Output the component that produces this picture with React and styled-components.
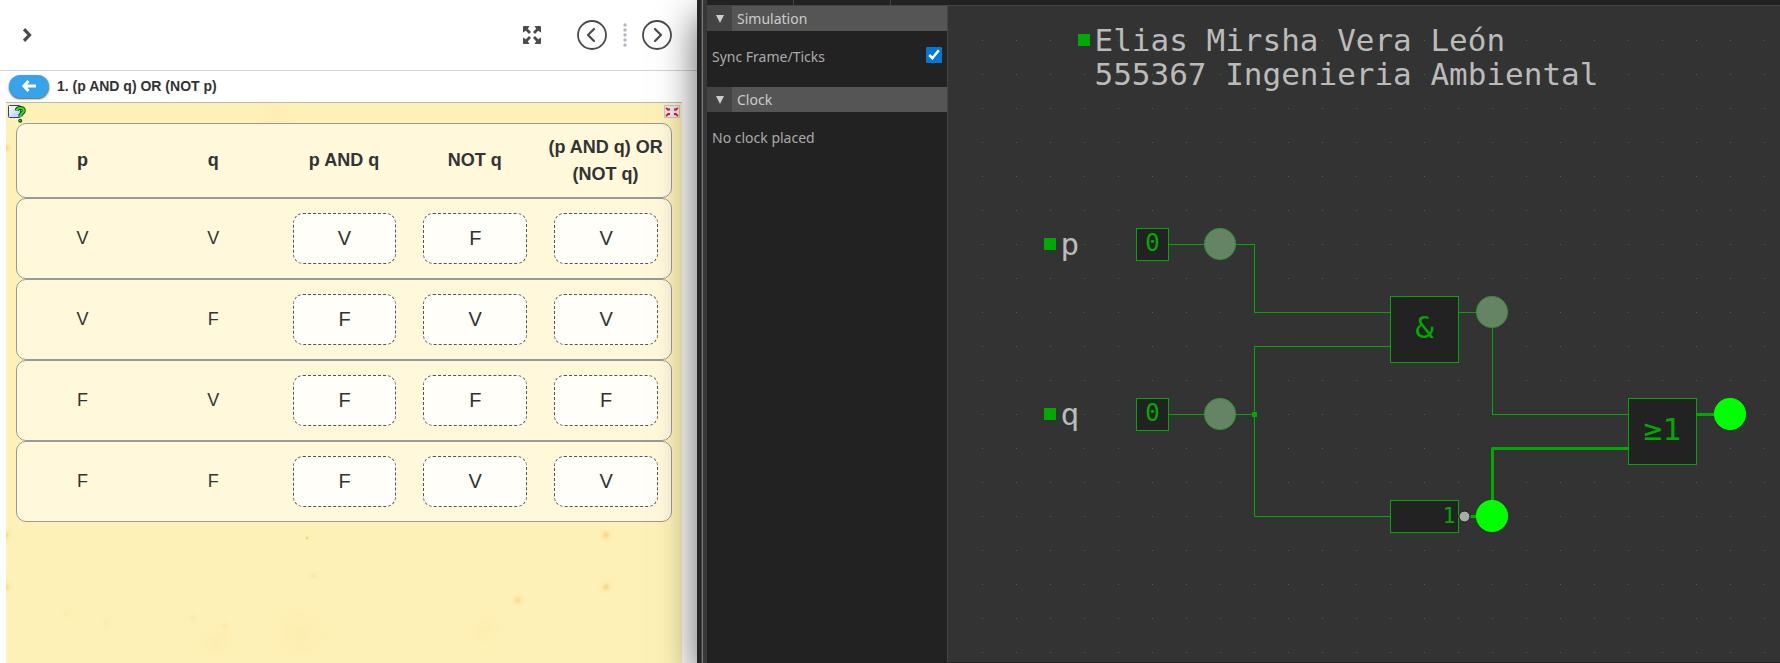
import React, { useState } from "react";
import styled, { createGlobalStyle } from "styled-components";

const GlobalStyle = createGlobalStyle`
  *, *::before, *::after { box-sizing: border-box; }
  body { margin: 0; background: #222; }
  button { font: inherit; color: inherit; border: 0; padding: 0; background: none; cursor: pointer; }
`;

const Screen = styled.div`
  display: grid;
  grid-template-columns: minmax(0, 697fr) 10px minmax(0, 1073fr);
  min-height: 100vh;
  overflow: hidden;
`;

/* ---------- lesson pane ---------- */

const Lesson = styled.main`
  display: flex;
  flex-direction: column;
  background: #fff;
  color: #333;
  font-family: "Liberation Sans", Arial, sans-serif;
`;

const LessonNav = styled.nav`
  display: flex;
  align-items: center;
  height: 71px;
  padding: 0 25px 0 23px;
  border-bottom: 1px solid #cdd5dc;
  color: #494c4e;
`;

const IconButton = styled.button`
  display: flex;
  margin-left: ${(p) => (p.$push ? "auto" : "0")};
  margin-right: ${(p) => p.$gap || 0}px;
`;

const LessonTitle = styled.header`
  display: flex;
  align-items: center;
  gap: 8px;
  height: 32px;
  margin: 0 15px 0 6px;
  padding: 0 0 1px 3px;
  border-bottom: 1px solid #b8b8b8;
`;

const BackButton = styled.button`
  display: flex;
  align-items: center;
  justify-content: center;
  width: 40px;
  height: 23px;
  border-radius: 12px;
  background: #36a3eb;
  box-shadow: 0 1px 2px rgba(0, 0, 0, 0.7);
`;

const Title = styled.h1`
  margin: 0;
  font-size: 14px;
  line-height: 20px;
`;

const spot = (x, y, r, alpha) =>
  `radial-gradient(circle at ${x} ${y}px, rgba(236, 180, 90, ${alpha}), rgba(250, 215, 120, ${alpha / 3}) ${r / 2}px, rgba(250, 215, 120, 0) ${r}px)`;

const Paper = styled.section`
  flex: 1;
  margin: 0 15px 0 6px;
  padding: 0 10px 24px;
  background-color: #fef1b7;
  background-image: ${[
    spot("0px", 45, 8, 0.5),
    spot("0px", 432, 8, 0.5),
    spot("0px", 484, 8, 0.5),
    spot("301px", 435, 3, 0.9),
    spot("600px", 432, 9, 0.5),
    spot("600px", 484, 9, 0.5),
    spot("512px", 497, 9, 0.4),
    spot("307px", 473, 7, 0.2),
    spot("187px", 515, 8, 0.15),
    spot("219px", 523, 8, 0.15),
    spot("60px", 511, 9, 0.1),
    spot("100px", 520, 9, 0.1),
    spot("295px", 530, 40, 0.08),
    spot("210px", 540, 24, 0.08),
    spot("270px", 10, 30, 0.06),
    spot("480px", 527, 24, 0.08),
  ].join(",")};
`;

const PaperTools = styled.div`
  display: flex;
  justify-content: space-between;
  align-items: flex-start;
  height: 20px;
  margin: 0 -8px;
  padding-top: 2px;
`;

const TruthTable = styled.table`
  display: block;
  font-size: 18px;
  line-height: 27px;
  thead, tbody { display: block; }
`;

const TableRow = styled.tr`
  display: grid;
  grid-template-columns: repeat(5, minmax(0, 1fr));
  align-items: center;
  height: ${(p) => (p.$head ? 75 : 81)}px;
  border: 1px solid #999;
  border-radius: 10px;
  background: rgba(255, 255, 255, 0.5);
`;

const HeadCell = styled.th`
  padding: 0;
  text-align: center;
`;

const Cell = styled.td`
  display: flex;
  justify-content: center;
  padding: 0 13px;
`;

const Answer = styled.button`
  flex: 1;
  height: 51px;
  margin-left: 1px;
  border: 1px dashed #555;
  border-radius: 10px;
  background: rgba(255, 255, 255, 0.8);
  font-size: 20px;
`;

/* ---------- simulator pane ---------- */

const Divider = styled.div`
  position: relative;
  z-index: 1;
  border-left: 4px solid #262626;
  border-right: 4px solid #383838;
  background: linear-gradient(90deg, #444 50%, #777 50%);
`;

const Simulator = styled.section`
  position: relative;
  display: flex;
  flex-direction: column;
  background: #222;
  border-bottom: 1px solid #222;
  box-shadow: -10px 16px 36px rgba(0, 0, 0, 0.62);
`;

const TabStrip = styled.div`
  display: flex;
  height: 6px;
  border-bottom: 1px solid #444;
`;

const TabEdge = styled.div`
  width: ${(p) => p.$width}px;
  border-right: 1px solid #444;
`;

const Workspace = styled.div`
  flex: 1;
  display: flex;
`;

const Sidebar = styled.aside`
  flex: 0 0 241px;
  border-right: 1px solid #444;
  color: #aaa;
  font-family: "Noto Sans", sans-serif;
  font-size: 14px;
  line-height: 20px;
`;

const SectionHead = styled.div`
  display: flex;
  height: 25px;
  background: #555;
  color: #ccc;
`;

const Toggle = styled.button`
  display: flex;
  align-items: center;
  justify-content: center;
  width: 25px;
  background: #444;
`;

const SectionName = styled.h2`
  margin: 0;
  padding: 0 5px;
  font-size: 14px;
  font-weight: 400;
  line-height: 25px;
`;

const SectionBody = styled.div`
  display: flex;
  align-items: flex-start;
  justify-content: space-between;
  padding: 16px 5px 20px;
`;

const Check = styled.input`
  width: 16px;
  height: 16px;
  margin: 0;
  accent-color: #0078d7;
`;

const Canvas = styled.div`
  flex: 1;
  min-width: 0;
  display: flex;
  background: #333;
`;

const Circuit = styled.svg`
  flex: 1;
  min-width: 0;
  min-height: 560px;
  font-family: "DejaVu Sans Mono", monospace;
`;

const Glyph = styled.text`
  font-size: ${(p) => p.$size || 31}px;
  fill: ${(p) => (p.$label ? "#bbb" : "#0a0")};
`;

const Wire = styled.path`
  fill: none;
  stroke: #0a0;
  stroke-width: ${(p) => (p.$on ? 3 : 1)};
  stroke-linejoin: round;
`;

const Box = styled.rect`
  fill: #222;
  stroke: #0a0;
`;

const Bulb = styled.circle`
  fill: ${(p) => (p.$on ? "#0f0" : "#648464")};
  stroke: ${(p) => (p.$on ? "#0f0" : "#2f8f2f")};
`;

const UNIT = 34;
const at = (n) => n * UNIT;
const route = (points) =>
  points.map(([x, y], i) => `${i ? "L" : "M"}${at(x)} ${at(y)}`).join(" ");

function Label({ x, y, lines }) {
  return (
    <g>
      <rect x={at(x) - 6.5} y={at(y) - 6.5} width="12" height="12" fill="#0a0" />
      {lines.map((line, i) => (
        <Glyph key={line} $label x={at(x) + 10} y={at(y + i) + 10}>
          {line}
        </Glyph>
      ))}
    </g>
  );
}

function Switch({ x, y, value }) {
  return (
    <g>
      <Box x={at(x) - 16} y={at(y) - 16} width="32" height="32" />
      <Glyph $size={24} x={at(x)} y={at(y) + 6} textAnchor="middle">
        {value}
      </Glyph>
    </g>
  );
}

function Gate({ x, y, symbol }) {
  return (
    <g>
      <Box x={at(x)} y={at(y) - 16} width="68" height="66" />
      <Glyph x={at(x + 1)} y={at(y) + 25} textAnchor="middle">
        {symbol}
      </Glyph>
    </g>
  );
}

function Lamp({ x, y, on }) {
  return <Bulb $on={on} cx={at(x) - 0.5} cy={at(y) - 0.5} r="15.7" />;
}

function CircuitBoard() {
  return (
    <Circuit role="img" aria-label="Logic circuit">
      <defs>
        <pattern id="grid" width={UNIT} height={UNIT} patternUnits="userSpaceOnUse">
          <rect width="1" height="1" fill="#090" />
        </pattern>
      </defs>
      <rect x="1" y="1" width="100%" height="100%" fill="url(#grid)" />
      <g transform="translate(0.5 0.5)">
        <Wire d={route([[6, 7], [9, 7], [9, 9], [13, 9]])} />
        <Wire d={route([[6, 12], [9, 12]])} />
        <Wire d={route([[13, 10], [9, 10], [9, 15], [13, 15]])} />
        <Wire d={route([[15, 9], [16, 9], [16, 12], [20, 12]])} />
        <Wire $on d={route([[15, 15], [16, 15], [16, 13], [20, 13]])} />
        <Wire $on d={route([[22, 12], [23, 12]])} />
        <rect x={at(9) - 2.5} y={at(12) - 2.5} width="5" height="5" fill="#0a0" />

        <Label x={4} y={1} lines={["Elias Mirsha Vera León", "555367 Ingenieria Ambiental"]} />
        <Label x={3} y={7} lines={["p"]} />
        <Label x={3} y={12} lines={["q"]} />

        <Switch x={6} y={7} value="0" />
        <Switch x={6} y={12} value="0" />
        <Gate x={13} y={9} symbol="&" />
        <Gate x={20} y={12} symbol="≥1" />

        <Box x={at(13)} y={at(15) - 16} width="68" height="32" />
        <Glyph $size={21} x={at(15) - 3} y={at(15) + 6} textAnchor="end">
          1
        </Glyph>
        <circle cx={at(15) + 6} cy={at(15)} r="5.5" fill="#aaa" stroke="#111" />

        <Lamp x={8} y={7} />
        <Lamp x={8} y={12} />
        <Lamp x={16} y={9} />
        <Lamp x={16} y={15} on />
        <Lamp x={23} y={12} on />
      </g>
    </Circuit>
  );
}

/* ---------- icons ---------- */

const MenuChevron = () => (
  <svg width="9" height="14" viewBox="0 0 9 14" fill="none" stroke="currentColor" strokeWidth="3.2">
    <path d="M1 1.200l5.500 5.800L1 12.800" />
  </svg>
);

const ExpandIcon = () => (
  <svg width="18" height="18" viewBox="0 0 18 18" fill="currentColor">
    {[0, 90, 180, 270].map((a) => (
      <g key={a} transform={`rotate(${a} 9 9)`}>
        <path d="M0 1a1 1 0 0 1 1-1h5.500L4.800 2.800 8 6 6 8 2.800 4.800 0 6.500z" />
      </g>
    ))}
  </svg>
);

const CircleArrow = ({ d }) => (
  <svg width="30" height="30" viewBox="0 0 30 30" fill="none" stroke="currentColor" strokeWidth="1.8" strokeLinecap="round" strokeLinejoin="round">
    <circle cx="15" cy="15" r="14" />
    <path d={d} strokeWidth="2.2" />
  </svg>
);

const DotSeparator = styled.svg`
  margin-right: 15px;
  fill: #b1bac3;
`;

const BackArrow = () => (
  <svg width="14" height="12" viewBox="0 0 14 12" fill="none" stroke="#fff" strokeWidth="3">
    <path d="M6.500 1L1.800 6l4.700 5M2 6h12" />
  </svg>
);

const HelpIcon = () => (
  <svg width="18" height="18" viewBox="0 0 18 18">
    <defs>
      <linearGradient id="note" x1="0" y1="0" x2="1" y2="1">
        <stop offset="0" stopColor="#fff" />
        <stop offset="1" stopColor="#a9c8e8" />
      </linearGradient>
    </defs>
    <rect x="0.500" y="0.500" width="12" height="12" rx="1" fill="url(#note)" stroke="#27448c" />
    <path d="M8.800 5.500C9 2.500 15.800 1.800 15.800 5.500c0 2.800-3.600 2.500-3.600 6" fill="none" stroke="#0a4a0a" strokeWidth="4" />
    <path d="M8.800 5.500C9 2.500 15.800 1.800 15.800 5.500c0 2.800-3.600 2.500-3.600 6" fill="none" stroke="#3fd62b" strokeWidth="2.200" />
    <circle cx="12.200" cy="15.800" r="2" fill="#0a5a0a" />
    <circle cx="12" cy="15.500" r="0.800" fill="#3fd62b" />
  </svg>
);

const ExitFullIcon = () => (
  <svg width="16" height="13" viewBox="0 0 16 13">
    <rect width="16" height="13" fill="#c4c4cc" />
    <rect x="1" y="1" width="14" height="11" fill="#e9e9ef" />
    <g stroke="#e8121c" strokeWidth="1.800">
      <path d="M2 3l3 2M14 3l-3 2M2 11l3-2.500M14 11l-3-2.500" />
    </g>
    <g fill="#e8121c">
      <path d="M3 5.500h3V3zM13 5.500h-3V3zM3 8h3v2.500zM13 8h-3v2.500z" />
    </g>
  </svg>
);

const DownTriangle = () => (
  <svg width="8" height="8" viewBox="0 0 8 8" fill="currentColor">
    <path d="M0 0h8L4 8z" />
  </svg>
);

/* ---------- page ---------- */

const HEADINGS = ["p", "q", "p AND q", "NOT q", "(p AND q) OR (NOT q)"];
const ROWS = ["VVVFV", "VFFVV", "FVFFF", "FFFVV"];

function Section({ name, children }) {
  return (
    <section>
      <SectionHead>
        <Toggle aria-label={`Collapse ${name}`}>
          <DownTriangle />
        </Toggle>
        <SectionName>{name}</SectionName>
      </SectionHead>
      <SectionBody>{children}</SectionBody>
    </section>
  );
}

export default function App() {
  const [synced, setSynced] = useState(true);
  return (
    <Screen>
      <GlobalStyle />
      <Lesson>
        <LessonNav>
          <IconButton aria-label="Open menu"><MenuChevron /></IconButton>
          <IconButton $push $gap={36} aria-label="Full screen"><ExpandIcon /></IconButton>
          <IconButton $gap={16} aria-label="Previous"><CircleArrow d="M17 9l-6 6 6 6" /></IconButton>
          <DotSeparator width="4" height="24" viewBox="0 0 4 24" aria-hidden="true">
            {[2, 7, 12, 17, 22].map((y) => (
              <circle key={y} cx="2" cy={y} r="1.700" />
            ))}
          </DotSeparator>
          <IconButton aria-label="Next"><CircleArrow d="M13 9l6 6-6 6" /></IconButton>
        </LessonNav>
        <LessonTitle>
          <BackButton aria-label="Back"><BackArrow /></BackButton>
          <Title>1. (p AND q) OR (NOT p)</Title>
        </LessonTitle>
        <Paper>
          <PaperTools>
            <IconButton aria-label="Help"><HelpIcon /></IconButton>
            <IconButton aria-label="Exit full screen"><ExitFullIcon /></IconButton>
          </PaperTools>
          <TruthTable>
            <thead>
              <TableRow $head>
                {HEADINGS.map((h) => (
                  <HeadCell key={h} scope="col">{h}</HeadCell>
                ))}
              </TableRow>
            </thead>
            <tbody>
              {ROWS.map((row) => (
                <TableRow key={row}>
                  {[...row].map((v, i) => (
                    <Cell key={i}>{i < 2 ? v : <Answer>{v}</Answer>}</Cell>
                  ))}
                </TableRow>
              ))}
            </tbody>
          </TruthTable>
        </Paper>
      </Lesson>
      <Divider />
      <Simulator>
        <TabStrip>
          <TabEdge $width={87} />
          <TabEdge $width={97} />
        </TabStrip>
        <Workspace>
          <Sidebar>
            <Section name="Simulation">
              <label htmlFor="sync">Sync Frame/Ticks</label>
              <Check
                id="sync"
                type="checkbox"
                checked={synced}
                onChange={(e) => setSynced(e.target.checked)}
              />
            </Section>
            <Section name="Clock">
              <span>No clock placed</span>
            </Section>
          </Sidebar>
          <Canvas>
            <CircuitBoard />
          </Canvas>
        </Workspace>
      </Simulator>
    </Screen>
  );
}
